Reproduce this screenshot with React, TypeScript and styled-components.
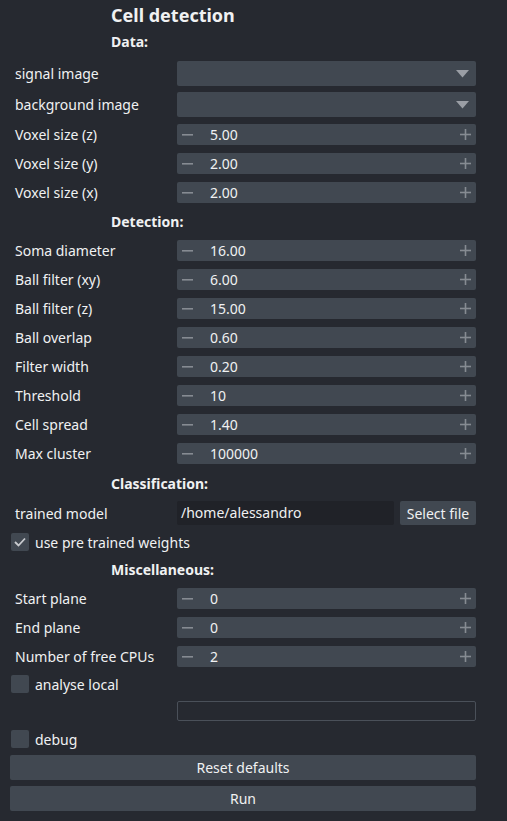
import React from "react";
import styled, { createGlobalStyle } from "styled-components";

const Global = createGlobalStyle`
  html, body { margin: 0; padding: 0; background: #262930; }
  body { font-family: "Noto Sans", "DejaVu Sans", sans-serif; color: #f0f1f2; }
`;

const Panel = styled.div`
  width: 507px;
  height: 821px;
  background: #262930;
  box-sizing: border-box;
  padding-left: 10px;
  display: flex;
  flex-direction: column;
  font-size: 14px;
`;

const Title = styled.div`
  height: 30px;
  line-height: 30px;
  padding-left: 101px;
  font-weight: 700;
  font-size: 18px;
`;

const Section = styled.div<{ $mt: number }>`
  margin-top: ${(p) => p.$mt}px;
  height: 24px;
  line-height: 24px;
  padding-left: 101px;
  font-weight: 700;
  font-size: 14px;
`;

const Row = styled.div<{ $mt: number; $h: number }>`
  margin-top: ${(p) => p.$mt}px;
  height: ${(p) => p.$h}px;
  display: grid;
  grid-template-columns: 167px 299px;
  align-items: center;
`;

const Label = styled.div`
  padding-left: 5px;
  white-space: nowrap;
`;

const Combo = styled.div`
  height: 25px;
  background: #414851;
  border-radius: 2px;
  display: flex;
  align-items: center;
  justify-content: flex-end;
  padding-right: 7px;
`;

const Spin = styled.div`
  height: 21px;
  background: #414851;
  border-radius: 2px;
  display: flex;
  align-items: center;
  padding: 0 5px 0 5px;
`;

const SpinValue = styled.div`
  flex: 1;
  padding-left: 17px;
  line-height: 21px;
`;

const FileRow = styled.div`
  margin-top: 5px;
  height: 24px;
  display: grid;
  grid-template-columns: 167px 217px 82px;
  align-items: center;
`;

const LineEdit = styled.div`
  height: 24px;
  background: #202228;
  border-radius: 2px;
  line-height: 24px;
  padding-left: 4px;
  white-space: nowrap;
`;

const SmallButton = styled.button`
  justify-self: end;
  width: 76px;
  height: 24px;
  background: #414851;
  border: none;
  border-radius: 2px;
  color: #f0f1f2;
  font-family: inherit;
  font-size: 14px;
  padding: 0;
`;

const CheckRow = styled.div<{ $mt: number }>`
  margin-top: ${(p) => p.$mt}px;
  height: 18px;
  display: flex;
  align-items: center;
  gap: 6px;
  padding-left: 1px;
`;

const Box = styled.div`
  width: 18px;
  height: 18px;
  border-radius: 2px;
  background: #414851;
  display: flex;
  align-items: center;
  justify-content: center;
`;

const EmptyEdit = styled.div`
  height: 20px;
  box-sizing: border-box;
  border: 1px solid #4a5059;
  border-radius: 2px;
  background: #262930;
`;

const WideButton = styled.button<{ $mt: number }>`
  margin-top: ${(p) => p.$mt}px;
  width: 466px;
  height: 25px;
  background: #414851;
  border: none;
  border-radius: 2px;
  color: #f0f1f2;
  font-family: inherit;
  font-size: 14px;
  padding: 0;
`;

const Minus = () => (
  <svg width="11" height="2" viewBox="0 0 11 2">
    <rect x="0" y="0" width="11" height="1.6" fill="#868b92" />
  </svg>
);

const Plus = () => (
  <svg width="11" height="11" viewBox="0 0 11 11">
    <rect x="0" y="4.7" width="11" height="1.6" fill="#868b92" />
    <rect x="4.7" y="0" width="1.6" height="11" fill="#868b92" />
  </svg>
);

const Arrow = () => (
  <svg width="13" height="8" viewBox="0 0 13 8">
    <polygon points="0,0 13,0 6.5,7.5" fill="#9a9ea5" />
  </svg>
);

const Check = () => (
  <svg width="12" height="10" viewBox="0 0 12 10">
    <polyline points="1,5 4.5,8.5 11,1.5" fill="none" stroke="#c9cbcf" strokeWidth="1.8" />
  </svg>
);

const SpinRow = ({ label, value, mt }: { label: string; value: string; mt: number }) => (
  <Row $mt={mt} $h={21}>
    <Label>{label}</Label>
    <Spin>
      <Minus />
      <SpinValue>{value}</SpinValue>
      <Plus />
    </Spin>
  </Row>
);

const ComboRow = ({ label, mt }: { label: string; mt: number }) => (
  <Row $mt={mt} $h={25}>
    <Label>{label}</Label>
    <Combo>
      <Arrow />
    </Combo>
  </Row>
);

export default function App() {
  return (
    <>
      <Global />
      <Panel>
        <Title>Cell detection</Title>
        <Section $mt={0}>Data:</Section>
        <ComboRow label="signal image" mt={7} />
        <ComboRow label="background image" mt={6} />
        <SpinRow label="Voxel size (z)" value="5.00" mt={7} />
        <SpinRow label="Voxel size (y)" value="2.00" mt={8} />
        <SpinRow label="Voxel size (x)" value="2.00" mt={8} />
        <Section $mt={7}>Detection:</Section>
        <SpinRow label="Soma diameter" value="16.00" mt={6} />
        <SpinRow label="Ball filter (xy)" value="6.00" mt={8} />
        <SpinRow label="Ball filter (z)" value="15.00" mt={8} />
        <SpinRow label="Ball overlap" value="0.60" mt={8} />
        <SpinRow label="Filter width" value="0.20" mt={8} />
        <SpinRow label="Threshold" value="10" mt={8} />
        <SpinRow label="Cell spread" value="1.40" mt={8} />
        <SpinRow label="Max cluster" value="100000" mt={8} />
        <Section $mt={8}>Classification:</Section>
        <FileRow>
          <Label>trained model</Label>
          <LineEdit>/home/alessandro</LineEdit>
          <SmallButton>Select file</SmallButton>
        </FileRow>
        <CheckRow $mt={8}>
          <Box>
            <Check />
          </Box>
          use pre trained weights
        </CheckRow>
        <Section $mt={7}>Miscellaneous:</Section>
        <SpinRow label="Start plane" value="0" mt={6} />
        <SpinRow label="End plane" value="0" mt={8} />
        <SpinRow label="Number of free CPUs" value="2" mt={8} />
        <CheckRow $mt={8}>
          <Box />
          analyse local
        </CheckRow>
        <Row $mt={8} $h={20}>
          <span />
          <EmptyEdit />
        </Row>
        <CheckRow $mt={9}>
          <Box />
          debug
        </CheckRow>
        <WideButton $mt={7}>Reset defaults</WideButton>
        <WideButton $mt={6}>Run</WideButton>
      </Panel>
    </>
  );
}
